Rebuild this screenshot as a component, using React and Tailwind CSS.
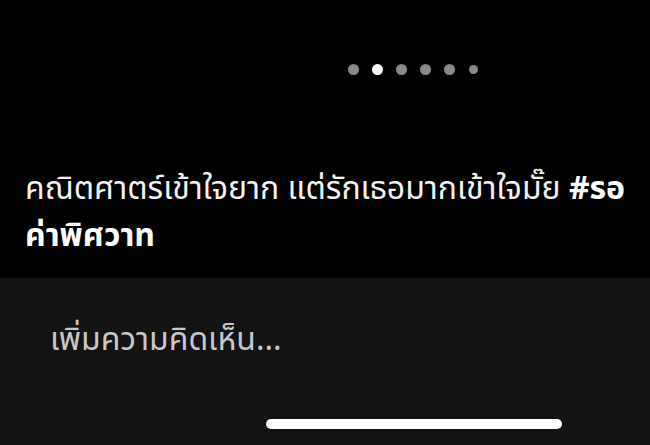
export default function App() {
  return (
    <div className="w-[650px] h-[445px] bg-black flex flex-col overflow-hidden" style={{ fontFamily: '"Noto Sans", "Noto Sans Thai", Tahoma, sans-serif' }}>
      <div className="h-[278px] flex flex-col">
        <div className="flex items-center gap-[13px] pl-[348px] pt-[64px]">
          <span className="w-[11px] h-[11px] rounded-full bg-[#8a8a8a]" />
          <span className="w-[11px] h-[11px] rounded-full bg-white" />
          <span className="w-[11px] h-[11px] rounded-full bg-[#8a8a8a]" />
          <span className="w-[11px] h-[11px] rounded-full bg-[#8a8a8a]" />
          <span className="w-[11px] h-[11px] rounded-full bg-[#8a8a8a]" />
          <span className="w-[9px] h-[9px] rounded-full bg-[#8a8a8a] ml-[1px]" />
        </div>
        <p className="mt-[88px] pl-[25px] text-[32px] leading-[47px] text-[#f2f2f2] whitespace-nowrap">
          คณิตศาตร์เข้าใจยาก แต่รักเธอมากเข้าใจมั๊ย <span className="font-bold text-white">#รอ</span>
          <br />
          <span className="font-bold text-white">ค่าพิศวาท</span>
        </p>
      </div>
      <div className="flex-1 bg-[#131313] flex flex-col">
        <div className="pl-[50px] pt-[36px] text-[32px] leading-[47px] text-[#c8c8c8]">เพิ่มความคิดเห็น...</div>
        <div className="mt-auto mb-[16px] ml-[266px] w-[296px] h-[10px] rounded-full bg-white" />
      </div>
    </div>
  );
}
